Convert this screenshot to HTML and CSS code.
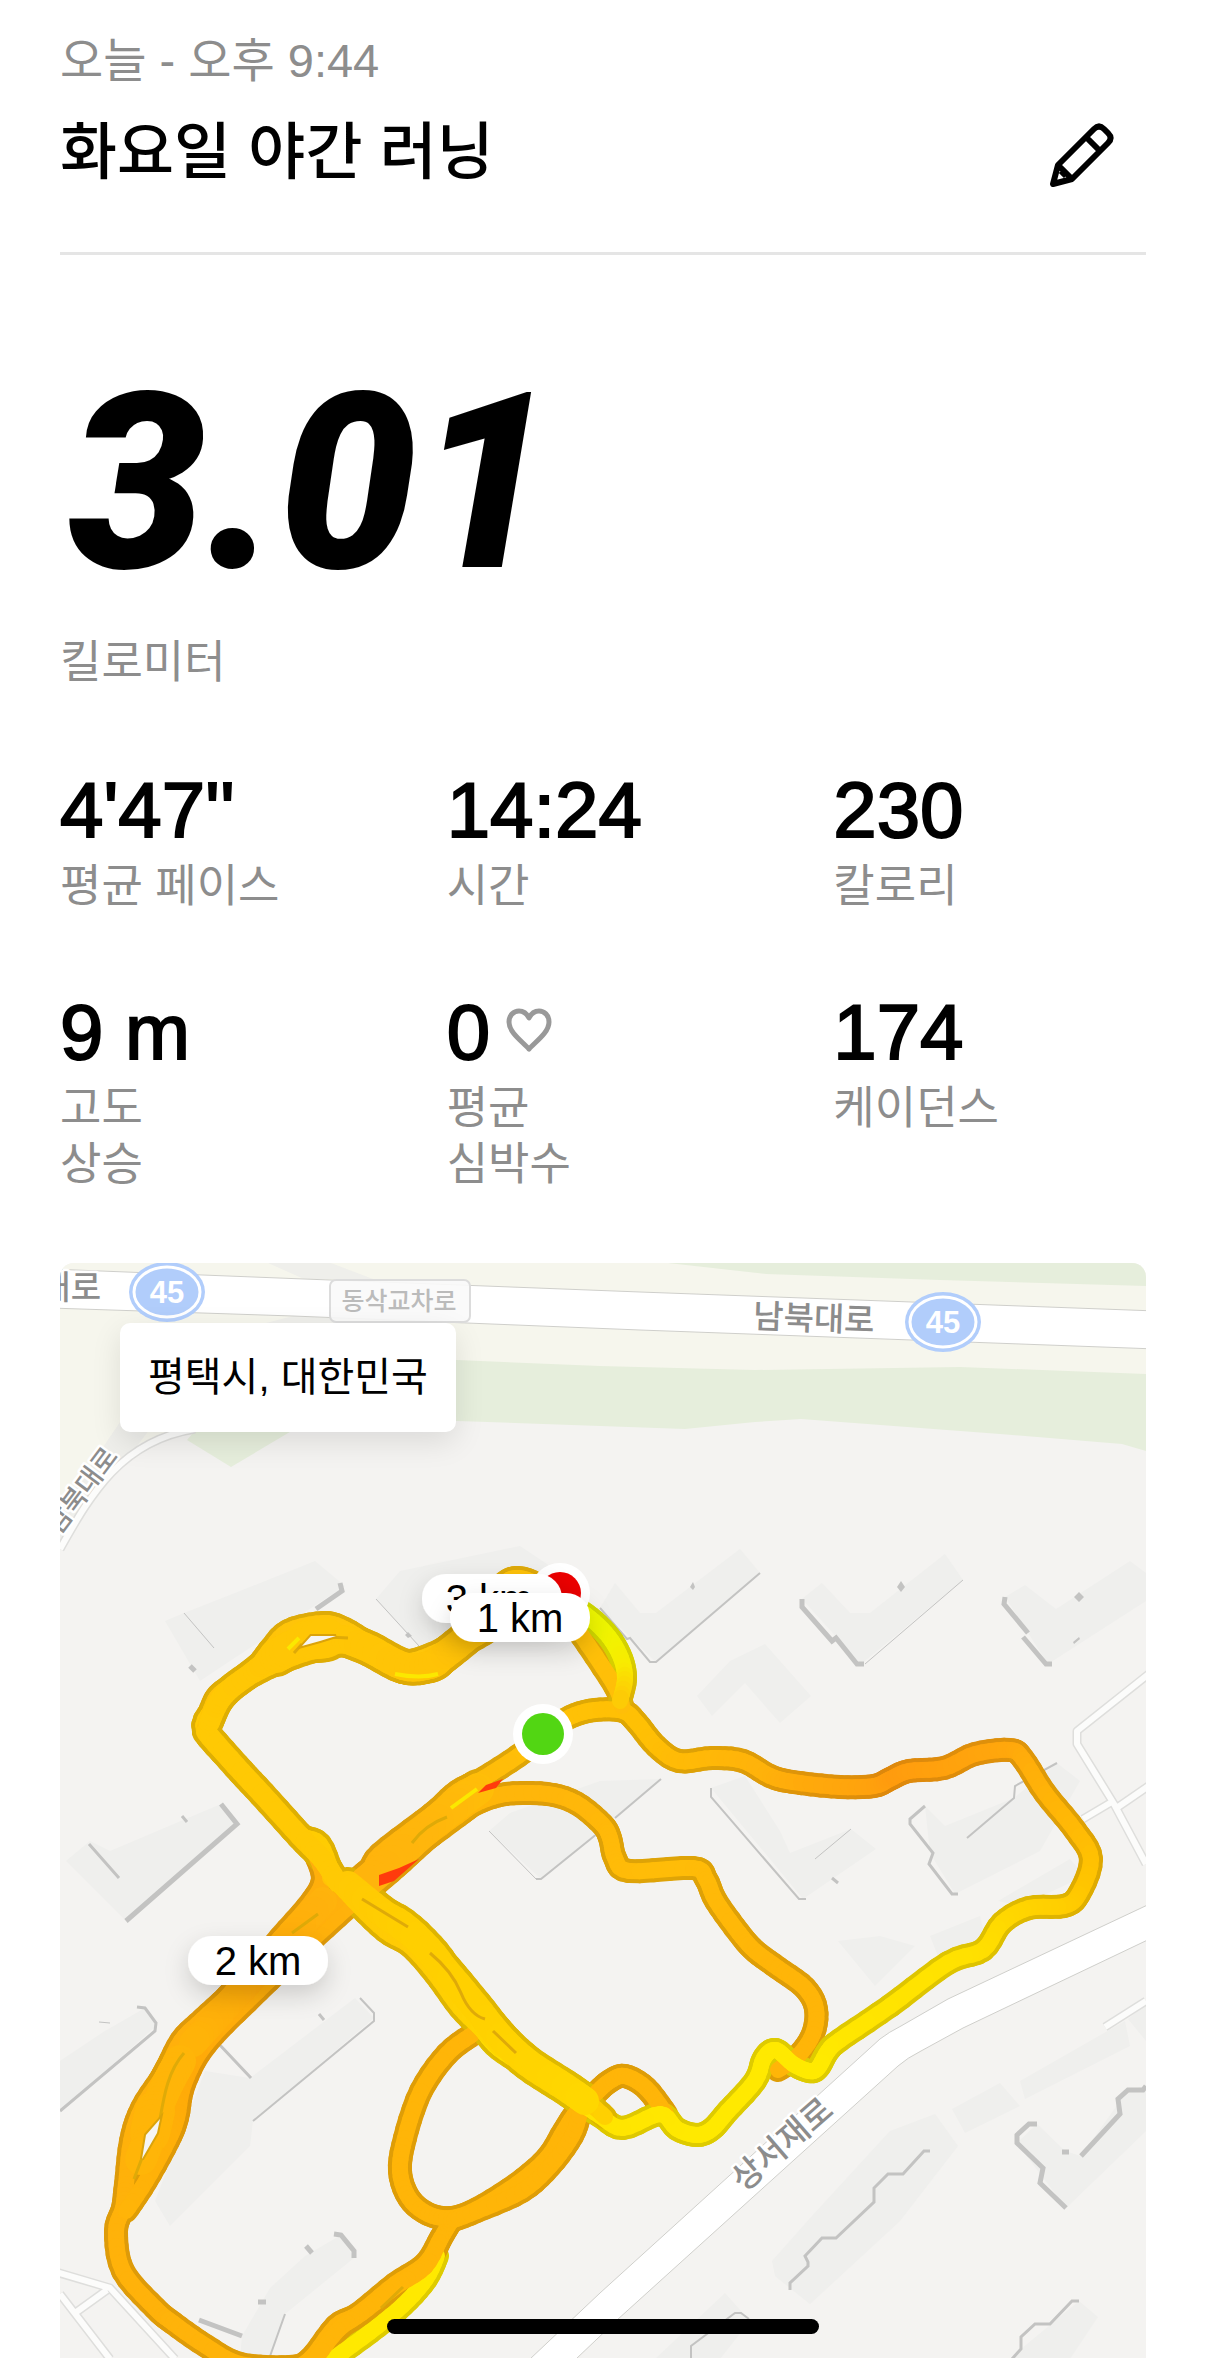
FILE: index.html
```html
<!DOCTYPE html>
<html lang="ko">
<head>
<meta charset="utf-8">
<meta name="viewport" content="width=device-width, initial-scale=1">
<title>화요일 야간 러닝</title>
<link rel="stylesheet" href="styles.css">
</head>
<body>
<main class="run">
  <header class="run-header">
    <div class="run-heading">
      <p class="run-date">오늘 - 오후 9:44</p>
      <h1 class="run-title">화요일 야간 러닝</h1>
    </div>
    <button class="edit-button" type="button" aria-label="제목 편집">
      <svg class="edit-icon" viewBox="0 0 64 64" aria-hidden="true">
        <path d="M3 61 8 42 44 6Q49 1 54 6L58 10Q63 15 58 20L22 56Z M36 14 50 28 M8 42 22 56 M11 48 16 53"/>
      </svg>
    </button>
  </header>

  <section class="distance">
    <p class="distance-value">3.01</p>
    <p class="label">킬로미터</p>
  </section>

  <dl class="stats">
    <div class="stat"><dd class="stat-value">4'47''</dd><dt class="label">평균 페이스</dt></div>
    <div class="stat"><dd class="stat-value">14:24</dd><dt class="label">시간</dt></div>
    <div class="stat"><dd class="stat-value">230</dd><dt class="label">칼로리</dt></div>
    <div class="stat"><dd class="stat-value">9 m</dd><dt class="label">고도<br>상승</dt></div>
    <div class="stat">
      <dd class="stat-value">0<svg class="heart-icon" viewBox="0 0 46 44" aria-hidden="true"><path d="M23 41C17 34 3 25 3 14C3 7 8 3 13 3C18 3 21 6 23 10C25 6 28 3 33 3C38 3 43 7 43 14C43 25 29 34 23 41Z"/></svg></dd>
      <dt class="label">평균<br>심박수</dt>
    </div>
    <div class="stat"><dd class="stat-value">174</dd><dt class="label">케이던스</dt></div>
  </dl>

  <section class="map" aria-label="러닝 경로 지도">
    <svg class="map-canvas" viewBox="60 1262 1086 1096" preserveAspectRatio="xMidYMid slice">
      <defs>
        <filter id="chip-shadow" x="-30%" y="-60%" width="160%" height="260%">
          <feDropShadow dx="0" dy="10" stdDeviation="12" flood-color="#000" flood-opacity="0.16"/>
        </filter>
      </defs>

      <g class="land">
        <path class="verge" d="M60 1262H1146V1380H457L300 1420 190 1430 140 1442 90 1490 60 1530Z"/>
        <path class="green" d="M668 1262 766 1273 940 1279 1146 1285V1262Z"/>
        <path class="green" d="M300 1354 457 1359 600 1365 755 1369 960 1366 1146 1373V1450L1122 1443 1000 1433 801 1418 755 1421 685 1428 600 1425 457 1420 300 1425 231 1466 187 1439 220 1400Z"/>
        <path class="ramp" d="M268 1262H331L373 1278 304 1278Z"/>
        <path class="ramp" d="M60 1510 120 1421 150 1428 60 1545Z"/>
        <path class="ramp" d="M266 1322 293 1315 460 1322Z"/>
      </g>

      <g class="buildings">
        <path d="M165 1620 184 1612 240 1590 315 1560 345 1585 230 1660 200 1680Z"/>
        <path d="M376 1598 400 1570 520 1545 550 1565 460 1640 419 1645Z"/>
        <path d="M600 1607 615 1582 640 1612H656L740 1548 760 1572 656 1661Z"/>
        <path d="M802 1598 822 1582 850 1612H870L945 1553 963 1579 861 1663Z"/>
        <path d="M1005 1596 1025 1584 1056 1608 1130 1560 1146 1572V1600L1048 1663Z"/>
        <path d="M697 1695 730 1660 765 1643 811 1695 780 1722 765 1705 745 1682 712 1715Z"/>
        <path d="M66 1860 90 1840 110 1850 221 1803 237 1823 126 1920Z"/>
        <path d="M489 1830 510 1812 600 1780 661 1778 541 1878Z"/>
        <path d="M711 1787 745 1775 780 1830 790 1852 851 1828 876 1848 803 1898Z"/>
        <path d="M925 1805 945 1825 1014 1797 1057 1762 1080 1780 1040 1850 955 1893 930 1852Z"/>
        <path d="M998 1900 1070 1858 1085 1875 1020 1905Z M930 1935 980 1915 985 1935 940 1960Z M838 1940 880 1935 915 1945 875 1985Z"/>
        <path d="M60 2060 105 2030 145 2007 156 2025 60 2110Z"/>
        <path d="M205 2070 250 2077 355 1997 374 2017 253 2120 250 2145 170 2225 155 2200Z"/>
        <path d="M270 2287 305 2255 341 2234 354 2257 285 2313 269 2358H240L242 2335Z"/>
        <path d="M772 2260 812 2215 890 2130 935 2113 958 2145 900 2220 810 2303 775 2275Z"/>
        <path d="M952 2108 1000 2082 1020 2105 965 2132Z M1020 2080 1125 2020 1130 2045 1025 2098Z M1128 2018 1146 2003V2040Z"/>
        <path d="M1017 2142 1037 2123 1065 2150 1081 2155 1128 2089 1146 2085V2130L1066 2207Z"/>
        <path d="M655 2358 725 2292 750 2320 720 2358Z M1021 2348 1079 2300 1098 2316 1070 2358H1012Z"/>
      </g>

      <g class="small-roads-edge">
        <path d="M60 1548C90 1495 120 1440 195 1428"/>
        <path d="M1150 1672 1077 1730V1743L1114 1803 1146 1863M1150 1784 1118 1806M1110 1802 1083 1818"/>
        <path d="M56 2271 110 2287 175 2358M60 2293 110 2358M75 2312 107 2289M1105 2026 1146 2000"/>
      </g>
      <g class="small-roads">
        <path d="M60 1548C90 1495 120 1440 195 1428"/>
        <path d="M1150 1672 1077 1730V1743L1114 1803 1146 1863M1150 1784 1118 1806M1110 1802 1083 1818"/>
        <path d="M56 2271 110 2287 175 2358M60 2293 110 2358M75 2312 107 2289M1105 2026 1146 2000"/>
      </g>
      <path class="road" d="M50 1268 304 1278 640 1291 1156 1310V1348L640 1329 293 1315 50 1307Z"/>
      <path class="road" d="M530 2358 600 2292 880 2038Q889 2031 901 2025L948 1998 1156 1900V1935L963 2027 921 2050Q907 2057 898 2065L617 2319 576 2358Z"/>

      <g class="walls wall-fine">
        <path d="M184 1612 214 1647M376 1598 419 1645M865 1663 963 1579M815 1858 851 1828M489 1830 536 1878M99 2021 110 2022"/>
      </g>
      <g class="walls wall-thin">
        <path d="M536 1878H541L598 1832M615 1817 661 1778M1057 1762 1015 1785 1014 1797 967 1837M360 1997 374 2012V2020L253 2120M600 1607 627 1638 630 1637 650 1661H656L760 1572M711 1787V1796L799 1898H806M285 2313 269 2358M749 2318 741 2312H735L691 2345V2358"/>
      </g>
      <g class="walls wall-mid">
        <path d="M89 1843 119 1877M925 1805 910 1818V1823L933 1852 929 1863 952 1893H958M137 2006 145 2007 156 2022 155 2030 60 2110M218 2042 251 2077M930 2150H924L903 2173H888L874 2187V2201L836 2237H822L805 2255 808 2261V2265L790 2282V2289M182 1815 187 1821M319 2013 324 2019M832 1877 838 1882M1079 2300H1072L1050 2323H1035L1021 2336V2348L1012 2358"/>
      </g>
      <g class="walls wall-thick">
        <path d="M316 1608 342 1590 340 1582M221 1803 237 1823 126 1920M802 1598V1606L832 1640 836 1637 857 1663H864M1005 1596 1004 1603 1028 1632M1023 1636 1046 1663H1052M334 2233 341 2234 354 2250V2257M306 2245 312 2252M258 2301H266M199 2319 242 2335M1037 2123H1029L1017 2134V2142L1043 2167 1040 2182 1066 2207M1146 2085 1143 2089H1128L1118 2098 1120 2113 1081 2155M1062 2151H1069M190 1665 195 1670"/>
      </g>
      <path class="wall-dot" d="M901 1580 905 1586 901 1591 897 1586ZM1079 1591 1084 1596 1079 1601 1074 1596ZM693 1581 695 1586 693 1589 690 1586ZM1073 1641 1079 1636 1080 1638 1074 1643ZM408 1631 412 1635 408 1637 405 1634Z"/>

      <g class="road-names">
        <text class="name-large" x="101" y="1298" text-anchor="end">남북대로</text>
        <text class="name-large" x="814" y="1329" text-anchor="middle" transform="rotate(2 814 1316)">남북대로</text>
        <text class="name-small" x="81" y="1499" text-anchor="middle" transform="rotate(-53 81 1489)">남북대로</text>
        <text class="name-large" x="781" y="2155" text-anchor="middle" transform="rotate(-41 781 2142)">상서재로</text>
      </g>
      <g class="crossing">
        <rect x="330" y="1279" width="140" height="42" rx="6"/>
        <text x="399" y="1309" text-anchor="middle">동삭교차로</text>
      </g>
      <g class="shield">
        <ellipse class="shield-base" cx="167" cy="1291" rx="38" ry="30"/>
        <ellipse class="shield-ring" cx="167" cy="1291" rx="33" ry="25"/>
        <text x="167" y="1302" text-anchor="middle">45</text>
      </g>
      <g class="shield">
        <ellipse class="shield-base" cx="943" cy="1321" rx="38" ry="30"/>
        <ellipse class="shield-ring" cx="943" cy="1321" rx="33" ry="25"/>
        <text x="943" y="1332" text-anchor="middle">45</text>
      </g>

      <g class="route" id="route"></g>

      <g class="route-accents">
        <path class="seam" d="M294 1652 302 1643M328 1636 348 1637M160 2118C164 2095 168 2070 184 2052M142 2157 134 2178"/>
        <path class="gap" d="M302 1645 311 1635 336 1635 320 1640Z M142 2158 146 2134 160 2118 157 2132Z"/>
        <path class="fast" d="M478 1792 486 1784 503 1778 496 1787Z M379 1885V1874L399 1867 419 1858 394 1880Z"/>
        <path class="slow" d="M288 1648 299 1637M395 1673Q420 1678 438 1673M451 1807 477 1788"/>
        <path class="seam" d="M412 1842Q425 1824 447 1816M292 1932 318 1913M362 1898 408 1926M430 1952Q452 1970 461 1992T485 2018M493 2030 516 2052M381 2307 403 2286"/>
      </g>

      <g class="marker"><circle class="marker-ring" cx="560" cy="1592" r="30"/><circle class="marker-end" cx="560" cy="1592" r="21"/></g>
      <g class="marker"><circle class="marker-ring" cx="543" cy="1733" r="30"/><circle class="marker-start" cx="543" cy="1733" r="21"/></g>
      <g class="chip"><rect x="422" y="1573" width="140" height="49" rx="24"/><text x="489" y="1612" text-anchor="middle">3 km</text></g>
      <g class="chip"><rect x="450" y="1592" width="140" height="49" rx="24"/><text x="520" y="1631" text-anchor="middle">1 km</text></g>
      <g class="chip"><rect x="188" y="1935" width="140" height="49" rx="24"/><text x="258" y="1974" text-anchor="middle">2 km</text></g>
    </svg>
    <p class="place">평택시, 대한민국</p>
  </section>
</main>
<div class="home-indicator"></div>
<script src="route.js"></script>
</body>
</html>
```
FILE: styles.css
```css
* {
  box-sizing: border-box;
}

body {
  margin: 0;
  background: #fff;
  color: #000;
  font-family: "Liberation Sans", "Noto Sans CJK KR", sans-serif;
}

p, h1, dl, dd {
  margin: 0;
}

.run {
  padding: 33px 60px 0;
}

.run-header {
  display: flex;
  align-items: flex-end;
  justify-content: space-between;
  padding: 0 32px 57px 0;
  border-bottom: 3px solid #e5e5e5;
}

.run-date {
  color: #8d8d8d;
  font-size: 47px;
  line-height: 56px;
}

.run-title {
  margin-top: 22px;
  font-size: 62px;
  font-weight: 500;
  line-height: 84px;
}

.edit-button {
  display: flex;
  margin-bottom: 8px;
  padding: 0;
  border: 0;
  background: none;
}

.edit-icon {
  width: 64px;
  height: 64px;
  fill: none;
  stroke: #000;
  stroke-width: 6;
  stroke-linejoin: round;
}

.distance {
  padding-top: 128px;
}

.distance-value {
  margin-bottom: 52px;
  padding-left: 8px;
  font-family: Roboto, "Liberation Sans", sans-serif;
  font-size: 246px;
  font-style: italic;
  font-weight: 900;
  line-height: 200px;
}

.label {
  color: #8d8d8d;
  font-size: 45px;
  line-height: 56px;
}

.stats {
  display: grid;
  grid-template-columns: repeat(3, 1fr);
  gap: 72px 74px;
  padding: 74px 0 70px;
}

.stat {
  display: flex;
  flex-direction: column;
  gap: 4px;
}

.stat-value {
  display: flex;
  align-items: center;
  gap: 16px;
  font-size: 78px;
  line-height: 90px;
  -webkit-text-stroke: 2px #000;
}

.heart-icon {
  width: 46px;
  height: 44px;
  margin-bottom: 4px;
  fill: none;
  stroke: #999;
  stroke-width: 5;
  stroke-linejoin: round;
}

.map {
  position: relative;
  aspect-ratio: 1086 / 1096;
  overflow: hidden;
  border-radius: 14px 14px 0 0;
  background: #f4f3f1;
}

.map-canvas {
  display: block;
  width: 100%;
  height: 100%;
}

.place {
  position: absolute;
  top: 60px;
  left: 60px;
  padding: 26px 28px;
  border-radius: 10px;
  background: #fff;
  box-shadow: 0 10px 30px rgba(0, 0, 0, 0.1);
  font-size: 40px;
  line-height: 57px;
}

.verge { fill: #f6f6ed; }
.green { fill: #e6eedc; }
.ramp { fill: #efefeb; }
.buildings { fill: #efefed; }

.small-roads-edge,
.small-roads {
  fill: none;
  stroke-linejoin: round;
}

.small-roads-edge {
  stroke: #dededc;
  stroke-width: 9;
}

.small-roads {
  stroke: #fcfcfb;
  stroke-width: 6;
}

.road {
  fill: #fff;
  stroke: #cfcfcb;
  stroke-width: 1;
}

.walls {
  fill: none;
  stroke: #c3c3c2;
}

.wall-fine { stroke-width: 1; }
.wall-thin { stroke-width: 2; }
.wall-mid { stroke-width: 3; }
.wall-thick { stroke-width: 5; }
.wall-dot { fill: #c3c3c2; }

.road-names {
  fill: #8c8c8c;
  stroke: #fff;
  stroke-width: 5px;
  stroke-linejoin: round;
  paint-order: stroke;
  font-weight: 500;
}

.name-large { font-size: 33px; }
.name-small { font-size: 27px; }

.crossing rect {
  fill: #fafafa;
  fill-opacity: 0.9;
  stroke: #dcdcdc;
  stroke-width: 2;
}

.crossing text {
  fill: #bbb;
  font-size: 25px;
  font-weight: 500;
}

.shield-base { fill: #b1cdfb; }

.shield-ring {
  fill: none;
  stroke: #fff;
  stroke-width: 3;
}

.shield text {
  fill: #fff;
  font-size: 31px;
  font-weight: 700;
}

.route path {
  fill: none;
  stroke-linecap: round;
  stroke-linejoin: round;
}

.gap {
  fill: #f6f5f3;
  stroke: #dba30a;
  stroke-width: 4;
  paint-order: stroke;
}

.fast { fill: #ff3b0c; }

.slow {
  fill: none;
  stroke: #fbe800;
  stroke-width: 4;
}

.seam {
  fill: none;
  stroke: #dfaa08;
  stroke-width: 3;
}

.marker-ring { fill: #fff; }
.marker-end { fill: #eb0000; }
.marker-start { fill: #52d613; }

.chip rect {
  fill: #fff;
  filter: url(#chip-shadow);
}

.chip text {
  font-size: 40px;
}

.home-indicator {
  position: fixed;
  bottom: 24px;
  left: 50%;
  width: 432px;
  height: 15px;
  margin-left: -216px;
  border-radius: 8px;
  background: #000;
}
```
FILE: route.js
```js
// Each leg of the run: a colour ramp by pace, and the points it passes.
// A leg that was run more than once carries its own, broader width.
const legs = [
  { ramp: ['#ffaf0c', '#ffb508'], points: [[314,1850],[323,1877],[312,1900],[280,1937],[236,1987],[203,2018],[181,2040],[164,2073],[142,2107],[131,2140],[126,2183],[123,2207],[116,2230],[123,2270],[155,2307],[173,2322],[206,2345],[240,2363],[290,2366],[310,2358],[336,2325],[358,2313],[395,2283],[425,2263],[441,2237],[451,2220]] },
  { ramp: ['#ffb60c', '#ffa908', '#ffb508'], points: [[380,1877],[366,1890],[314,1937],[258,1990],[206,2043],[184,2083],[177,2117],[168,2140],[146,2180],[126,2210]] },
  { ramp: ['#ffe900', '#ffe900'], points: [[437,2255],[426,2278],[403,2304],[370,2331],[330,2360]] },
  { ramp: ['#ffb508', '#ffb508'], points: [[441,2237],[425,2266],[395,2286],[362,2312],[338,2329],[314,2360]] },
  { ramp: ['#ffb508', '#ffb508'], points: [[473,2033],[447,2053],[421,2090],[405,2137],[400,2170],[409,2197],[428,2213],[451,2217],[477,2208],[517,2183],[547,2157],[564,2130],[576,2112],[595,2093],[610,2080],[625,2075],[646,2087],[666,2113]] },
  { ramp: ['#ffb508', '#ffb508'], points: [[451,2220],[477,2210],[522,2190],[550,2165],[572,2135],[580,2112]] },
  { ramp: ['#ffb508', '#ffb60a', '#ffbc08', '#ffb508', '#ffb508'], points: [[380,1877],[414,1848],[458,1815],[477,1802],[506,1793],[547,1793],[576,1802],[602,1823],[610,1837],[615,1857],[629,1870],[693,1867],[706,1878],[716,1900],[739,1932],[755,1950],[778,1967],[805,1987],[816,2008],[813,2033],[798,2055],[778,2069]] },
  { ramp: ['#ffc107', '#ffc004', '#ffb20a', '#ff9b0e', '#ffa90c', '#ffc600', '#ffe000', '#ffea00', '#ffe900', '#ffe900', '#ffe300', '#ffd900'], points: [[543,1733],[570,1716],[595,1709],[623,1710],[637,1722],[656,1745],[679,1760],[712,1757],[743,1760],[770,1775],[793,1781],[840,1786],[874,1785],[890,1778],[909,1770],[944,1767],[975,1753],[1010,1749],[1023,1758],[1045,1792],[1075,1829],[1091,1858],[1079,1893],[1064,1905],[1029,1907],[1002,1922],[983,1949],[948,1962],[890,2005],[840,2039],[828,2050],[818,2067],[809,2070],[793,2063],[776,2049],[764,2057],[755,2080],[728,2110],[712,2128],[697,2134],[677,2128],[660,2113],[623,2127],[600,2115],[569,2094],[530,2068],[499,2048],[482,2029],[465,2007]] },
  { ramp: ['#ffc107', '#ffb60c', '#ffae0c'], points: [[543,1733],[525,1750],[484,1777],[458,1790],[432,1813],[380,1853],[367,1873],[336,1900],[310,1925]] },
  { ramp: ['#ffc306', '#ffd300', '#ffb60a', '#ffd400'], points: [[330,1877],[373,1902],[406,1919],[438,1950],[460,1982],[493,2019],[536,2066],[575,2090],[605,2116]] },
  { ramp: ['#ffc904', '#ffcc02', '#ffcb04', '#ffd600'], points: [[213,1707],[204,1730],[238,1768],[262,1794],[298,1832],[320,1843],[335,1877],[354,1900],[385,1930],[410,1945],[435,1973],[460,2007],[482,2029],[500,2048]] },
  { ramp: ['#ffc904', '#ffc107'], points: [[213,1707],[223,1693],[243,1680],[277,1663],[321,1648],[349,1645],[373,1656],[403,1671],[425,1671],[440,1666],[455,1650],[484,1633],[520,1610]] },
  { ramp: ['#ffc107', '#ffc60a', '#ffbe08'], points: [[204,1730],[213,1703],[223,1690],[251,1672],[269,1650],[288,1630],[323,1622],[345,1628],[373,1645],[403,1660],[432,1653],[454,1640],[480,1613],[499,1587],[515,1577],[536,1583],[560,1603],[582,1635],[615,1685],[622,1705]] },
  { ramp: ['#ecf900', '#eef500', '#f8ec00', '#ffc107'], points: [[570,1603],[590,1617],[609,1636],[621,1657],[625,1678],[620,1700]] },
  { width: 36, ramp: ['#ffb30c', '#ffa90a', '#ffb508'], points: [[323,1900],[296,1930],[266,1962],[243,1987],[215,2018],[193,2042]] },
  { width: 40, ramp: ['#ffb508', '#ffb508'], points: [[180,2060],[168,2082],[158,2104]] },
  { width: 48, ramp: ['#ffb508', '#ffb508'], points: [[155,2110],[150,2132]] },
  { width: 40, ramp: ['#ffb508', '#ffb508'], points: [[148,2140],[141,2158]] },
  { width: 40, ramp: ['#ffbe08', '#ffb60c', '#ffb30c'], points: [[478,1788],[458,1803],[423,1831],[391,1860],[365,1882]] },
  { width: 28, ramp: ['#ffc904', '#ffc904'], points: [[206,1731],[236,1765],[262,1793],[300,1835],[322,1858],[338,1882]] },
  { width: 36, ramp: ['#ffc904', '#ffcf00', '#ffd000', '#ffd400', '#ffd800'], points: [[348,1884],[380,1910],[414,1935],[445,1969],[475,2005],[500,2036],[528,2062],[565,2086],[585,2100]] },
  { width: 29, ramp: ['#ffc904', '#ffc605'], points: [[209,1722],[218,1702],[230,1688],[250,1673],[264,1662]] },
  { width: 42, ramp: ['#ffc605', '#ffc605'], points: [[276,1655],[292,1646]] },
  { width: 48, ramp: ['#ffc605', '#ffc605'], points: [[306,1639],[326,1637]] },
  { width: 36, ramp: ['#ffc605', '#ffc107'], points: [[345,1638],[370,1648],[403,1665],[428,1664],[450,1650],[485,1621]] }
];

const svgNS = 'http://www.w3.org/2000/svg';
const layer = document.getElementById('route');

const toRgb = hex => [1, 3, 5].map(i => parseInt(hex.slice(i, i + 2), 16));

function colourAt(ramp, t, shade) {
  const place = Math.min(t, 0.9999) * (ramp.length - 1);
  const i = Math.floor(place);
  const a = toRgb(ramp[i]);
  const b = toRgb(ramp[i + 1]);
  return `rgb(${a.map((v, k) => Math.round((v + (b[k] - v) * (place - i)) * shade)).join(',')})`;
}

// Catmull-Rom sampling, so that the line bends smoothly through its points.
function sample(points, steps = 5) {
  const at = i => points[Math.max(0, Math.min(points.length - 1, i))];
  const out = [];
  for (let i = 0; i < points.length - 1; i++) {
    for (let s = 0; s < steps; s++) {
      const t = s / steps;
      out.push([0, 1].map(k => {
        const [p0, p1, p2, p3] = [at(i - 1)[k], at(i)[k], at(i + 1)[k], at(i + 2)[k]];
        return 0.5 * (2 * p1 + (p2 - p0) * t + (2 * p0 - 5 * p1 + 4 * p2 - p3) * t * t + (3 * p1 - p0 - 3 * p2 + p3) * t * t * t);
      }));
    }
  }
  out.push(points[points.length - 1]);
  return out;
}

function drawLeg(leg, inset, shade) {
  const line = sample(leg.points);
  for (let i = 0; i < line.length - 1; i++) {
    const path = document.createElementNS(svgNS, 'path');
    path.setAttribute('d', `M${line[i].map(v => v.toFixed(1)).join(' ')}L${line[i + 1].map(v => v.toFixed(1)).join(' ')}`);
    path.setAttribute('stroke', colourAt(leg.ramp, i / line.length, shade));
    path.setAttribute('stroke-width', (leg.width || 24) - inset);
    layer.append(path);
  }
}

legs.forEach(leg => drawLeg(leg, 0, 0.87));
legs.forEach(leg => drawLeg(leg, 8, 1));
```
